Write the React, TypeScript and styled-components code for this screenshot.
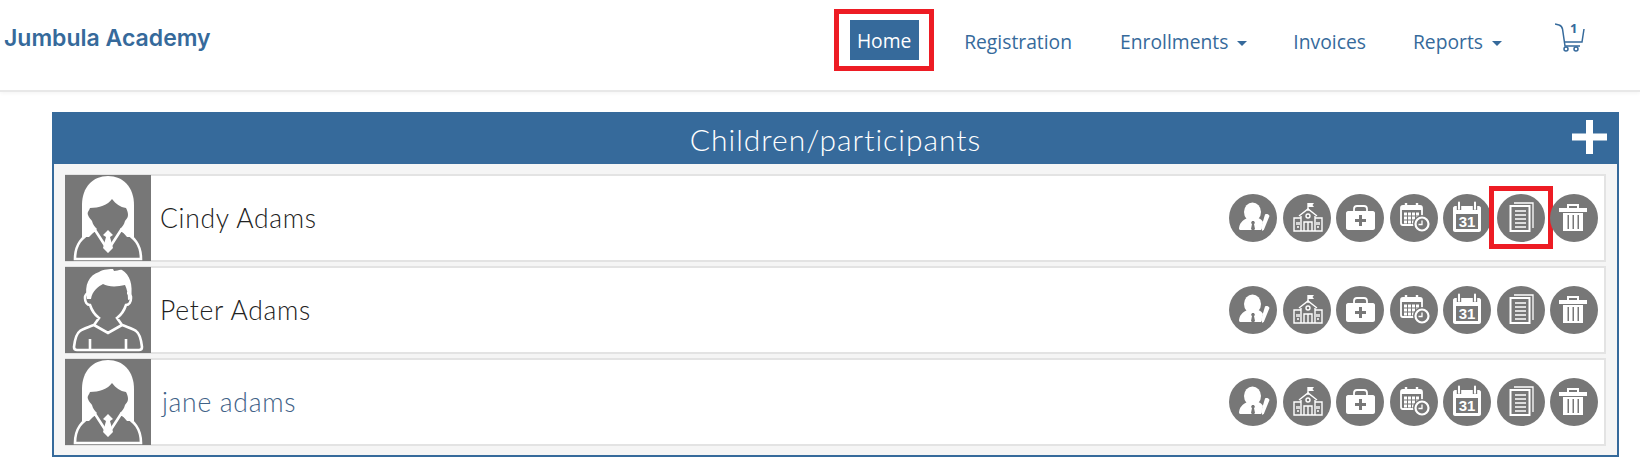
import React from "react";
import styled, { createGlobalStyle } from "styled-components";

const Global = createGlobalStyle`
  html, body { margin: 0; padding: 0; background: #fff; }
  body { font-family: "Open Sans", "Liberation Sans", sans-serif; width: 1640px; height: 463px; overflow: hidden; }
`;

const BLUE = "#366a9b";
const GREY = "#777777";

const Header = styled.header`
  height: 90px;
  border-bottom: 2px solid #e8e8e8;
  display: flex;
  align-items: flex-start;
  box-shadow: 0 1px 4px rgba(0,0,0,.05);
`;
const Brand = styled.a`
  margin: 23px 0 0 4px;
  font: 600 23px/30px Inter, sans-serif;
  color: ${BLUE};
`;
const Nav = styled.nav`
  margin-left: auto;
  display: flex;
  align-items: flex-start;
  padding-right: 55px;
`;
const HomeFrame = styled.div`
  box-sizing: border-box;
  width: 100px;
  height: 62px;
  margin: 9px 30px 0 0;
  border: 5px solid #ed1c24;
  display: flex;
  align-items: center;
  justify-content: center;
`;
const HomeLink = styled.a`
  width: 69px;
  height: 40px;
  background: ${BLUE};
  color: #fff;
  font-size: 19.300px;
  line-height: 41px;
  text-align: center;
`;
const NavLink = styled.a<{ $gap: number }>`
  margin: 29px ${p => p.$gap}px 0 0;
  color: ${BLUE};
  font-size: 19.300px;
  line-height: 26px;
  display: flex;
  align-items: center;
  gap: 9px;
`;
const Caret = styled.span`
  width: 0;
  height: 0;
  margin-top: 3px;
  border-left: 5.5px solid transparent;
  border-right: 5.5px solid transparent;
  border-top: 5px solid ${BLUE};
`;
const CartBox = styled.div`
  position: relative;
  width: 30px;
  height: 28px;
  margin-top: 23px;
`;
const CartCount = styled.span`
  position: absolute;
  left: 15px;
  top: -2px;
  color: ${BLUE};
  font: 700 13px/14px "Open Sans", sans-serif;
`;
const Panel = styled.section`
  box-sizing: border-box;
  margin: 20px 0 0 52px;
  width: 1567px;
  height: 345px;
  border: 2px solid ${BLUE};
  border-top: 0;
  background: #f5f5f5;
`;
const PanelHead = styled.div`
  position: relative;
  height: 52px;
  background: ${BLUE};
  color: #fff;
  text-align: center;
  font: 300 30px/54px Lato, sans-serif;
  letter-spacing: 1px;
`;
const AddIcon = styled.svg`
  position: absolute;
  right: 10px;
  top: 8px;
`;
const Rows = styled.div`
  padding: 10px 11px 0 11px;
  display: flex;
  flex-direction: column;
  gap: 4px;
`;
const Row = styled.div`
  box-sizing: border-box;
  height: 88px;
  background: #fff;
  border: 2px solid #e3e3e3;
  border-left: 0;
  display: flex;
  align-items: center;
`;
const Avatar = styled.svg`
  width: 86px;
  height: 86px;
  flex: none;
  background: ${GREY};
`;
const Name = styled.span<{ $link?: boolean }>`
  margin-left: ${p => (p.$link ? 11 : 9)}px;
  font: 300 26.500px/34px Lato, sans-serif;
  letter-spacing: 0.7px;
  color: ${p => (p.$link ? "#3f6287" : "#222")};
`;
const Actions = styled.div`
  margin-left: auto;
  margin-right: 6px;
  display: flex;
  gap: 5.5px;
`;
const Action = styled.span`
  position: relative;
  width: 48px;
  height: 48px;
  border-radius: 50%;
  background: ${GREY};
  display: block;
`;
const Highlight = styled.span`
  position: absolute;
  left: -8px;
  top: -8px;
  width: 64px;
  height: 63px;
  box-sizing: border-box;
  border: 5px solid #ed1c24;
`;
const Glyph = styled.svg`
  display: block;
  width: 48px;
  height: 48px;
`;
const CalNumber = styled.text`
  font: 700 15px "Liberation Sans", sans-serif;
  fill: #fff;
`;

const Female = () => (
  <Avatar viewBox="0 0 86 86">
    <path fill="#fff" d="M17 62V30C17 12 28 1 43 1s26 11 26 29v32z" />
    <path fill="#777" d="M47 24C43 30 34 33 25 33c-1 3-3 4-2 7 1 3 3 4 4 6 1 4 3 6 5 8L24 62h38l-7-8c2-2 4-4 5-8 1-2 3-3 3-6 0-3-1-5-2-7-6-1-10-4-14-9z" />
    <path fill="#777" d="M10 86L16 62h54l6 24z" />
    <path fill="none" stroke="#fff" strokeWidth="2.600" d="M10 84c0-14 6-22 20-29l13 20 13-20c14 7 20 15 20 29z" />
    <path fill="#fff" d="M43 55l5 5-3 2 3 11-5 5-5-5 3-11-3-2z" />
  </Avatar>
);
const Male = () => (
  <Avatar viewBox="0 0 86 86">
    <path fill="#fff" d="M22 32c-3-14 2-24 12-27 4-3 12-3 14-3l1 2c3 0 6-2 8-1 8 5 11 14 9 29l-3 1c0-6-1-11-3-15-8 2-17 2-22-1-4 2-11 7-12 15z" />
    <path fill="none" stroke="#fff" strokeWidth="2.600" d="M24 26c-2 0-4 2-4 5 0 4 2 7 5 7 2 6 5 10 9 13l-5 7c-8 3-12 4-14 6-3 2-5 7-6 16 0 2 1 3 3 3h62c2 0 3-1 3-3-1-9-3-14-6-16-2-2-6-3-14-6l-5-7c4-3 7-7 9-13 3 0 5-3 5-7 0-3-2-5-4-5M29 58l14 8 14-8M25 72v11M61 72v11" />
  </Avatar>
);

const Person = () => (
  <Glyph viewBox="0 0 48 48">
    <ellipse cx="23.500" cy="18" rx="8.500" ry="9.500" fill="#fff" />
    <path fill="#fff" d="M10 35c0-5 3-9 9-11l5 3 5-3c3 1 4 2 5 4l-2 8H12c-1 0-2-.5-2-1z" />
    <path fill="#777" d="M23 27h2l1 2-1 1 1 5-2 2-2-2 1-5-1-1z" />
    <path fill="#fff" d="M36 20.500c1.500-1 3.500-.5 4.500 1.500L35 35.500l-1.500 1.500-1.500-3z" />
  </Glyph>
);
const School = () => (
  <Glyph viewBox="0 0 48 48">
    <g fill="none" stroke="#fff" strokeWidth="1.400">
      <path d="M25 17V9" />
      <path d="M16 22l9-7 9 7M18 22v15h14V22M18 24h-7v13h28V24h-7" />
      <circle cx="25" cy="22" r="2" />
      <path d="M21 37v-9h8v9M25 28v9M14 28v3M16 28v3M34 28v3M36 28v3M14 33h2M34 33h2" />
    </g>
    <path fill="#fff" d="M25 9h6l-1.500 2 1.500 2h-6z" />
  </Glyph>
);
const Kit = () => (
  <Glyph viewBox="0 0 48 48">
    <path fill="none" stroke="#fff" strokeWidth="1.800" d="M18 17v-2c0-2 1-3 3-3h7c2 0 3 1 3 3v2" />
    <path fill="#fff" fillRule="evenodd" d="M12 17h25c1 0 2 1 2 2v15c0 1-1 2-2 2H12c-1 0-2-1-2-2V19c0-1 1-2 2-2zM23 21v4h-4v3h4v4h3v-4h4v-3h-4v-4z" />
  </Glyph>
);
const Schedule = () => (
  <Glyph viewBox="0 0 48 48">
    <g fill="none" stroke="#fff">
      <rect x="11" y="12" width="21" height="19" rx="2" strokeWidth="1.800" />
      <path d="M16 9v5M27 9v5" strokeWidth="2.400" />
    </g>
    <path fill="#fff" d="M11 12h21v4H11z" />
    <g fill="#fff">
      {[14, 18, 22, 26].flatMap(x => [18.5, 22.5, 26.5].map(y => <rect key={`${x}-${y}`} x={x} y={y} width="3" height="3" />))}
    </g>
    <circle cx="32" cy="30" r="9" fill="#777" />
    <circle cx="32" cy="30" r="6.500" fill="none" stroke="#fff" strokeWidth="2.200" />
    <path d="M32 26.500v4h-3.500" fill="none" stroke="#fff" strokeWidth="1.300" />
  </Glyph>
);
const Calendar = () => (
  <Glyph viewBox="0 0 48 48">
    <path fill="#fff" fillRule="evenodd" d="M12 12h24c1 0 2 1 2 2v22c0 1-1 2-2 2H12c-1 0-2-1-2-2V14c0-1 1-2 2-2zM13 20v15h22V20z" />
    <path d="M16 8v8M32 8v8" stroke="#777" strokeWidth="4.400" />
    <path d="M16 8.500v6.500M32 8.500v6.500" stroke="#fff" strokeWidth="2" strokeLinecap="round" />
    <CalNumber x="24" y="33" textAnchor="middle">31</CalNumber>
  </Glyph>
);
const Docs = () => (
  <Glyph viewBox="0 0 48 48">
    <path fill="none" stroke="#fff" strokeWidth="1.300" d="M17 9h19v25" />
    <path fill="none" stroke="#fff" strokeWidth="2" d="M13.500 12h19v25h-19z" />
    <path stroke="#fff" strokeWidth="1.500" d="M18 17h11M18 21h11M18 25h11M18 29h11M18 33h11" />
  </Glyph>
);
const Trash = () => (
  <Glyph viewBox="0 0 48 48">
    <path fill="#fff" d="M9 14h28v4H9z" />
    <path fill="none" stroke="#fff" strokeWidth="2" d="M18 14v-3h10v3" />
    <path fill="#fff" fillRule="evenodd" d="M13 19h20v18H13zM17.500 21v14H19V21zM22.500 21v14H24V21zM27.500 21v14H29V21z" />
  </Glyph>
);

const Cart = () => (
  <svg width="30" height="32" viewBox="0 0 30 32" fill="none" stroke={BLUE} strokeWidth="1.500">
    <path d="M0 1l4 1c2 .5 3 2 3.500 4L10 23h15" />
    <path d="M9.500 19H27L29 6" />
    <circle cx="11" cy="26" r="2" />
    <circle cx="21" cy="26" r="2" />
  </svg>
);

const people = [
  { name: "Cindy Adams", Pic: Female, mark: true },
  { name: "Peter Adams", Pic: Male },
  { name: "jane adams", Pic: Female, link: true },
];

export default function App() {
  return (
    <>
      <Global />
      <Header>
        <Brand>Jumbula Academy</Brand>
        <Nav>
          <HomeFrame><HomeLink>Home</HomeLink></HomeFrame>
          <NavLink $gap={48}>Registration</NavLink>
          <NavLink $gap={46}>Enrollments <Caret /></NavLink>
          <NavLink $gap={47}>Invoices</NavLink>
          <NavLink $gap={53}>Reports <Caret /></NavLink>
          <CartBox><Cart /><CartCount>1</CartCount></CartBox>
        </Nav>
      </Header>
      <Panel>
        <PanelHead>
          Children/participants
          <AddIcon width="35" height="34" viewBox="0 0 35 34">
            <path fill="#fff" d="M14 0h7v13.500h14v7H21V34h-7V20.500H0v-7h14z" />
          </AddIcon>
        </PanelHead>
        <Rows>
          {people.map(p => (
            <Row key={p.name}>
              <p.Pic />
              <Name $link={p.link}>{p.name}</Name>
              <Actions>
                <Action><Person /></Action>
                <Action><School /></Action>
                <Action><Kit /></Action>
                <Action><Schedule /></Action>
                <Action><Calendar /></Action>
                <Action><Docs />{p.mark && <Highlight />}</Action>
                <Action><Trash /></Action>
              </Actions>
            </Row>
          ))}
        </Rows>
      </Panel>
    </>
  );
}
